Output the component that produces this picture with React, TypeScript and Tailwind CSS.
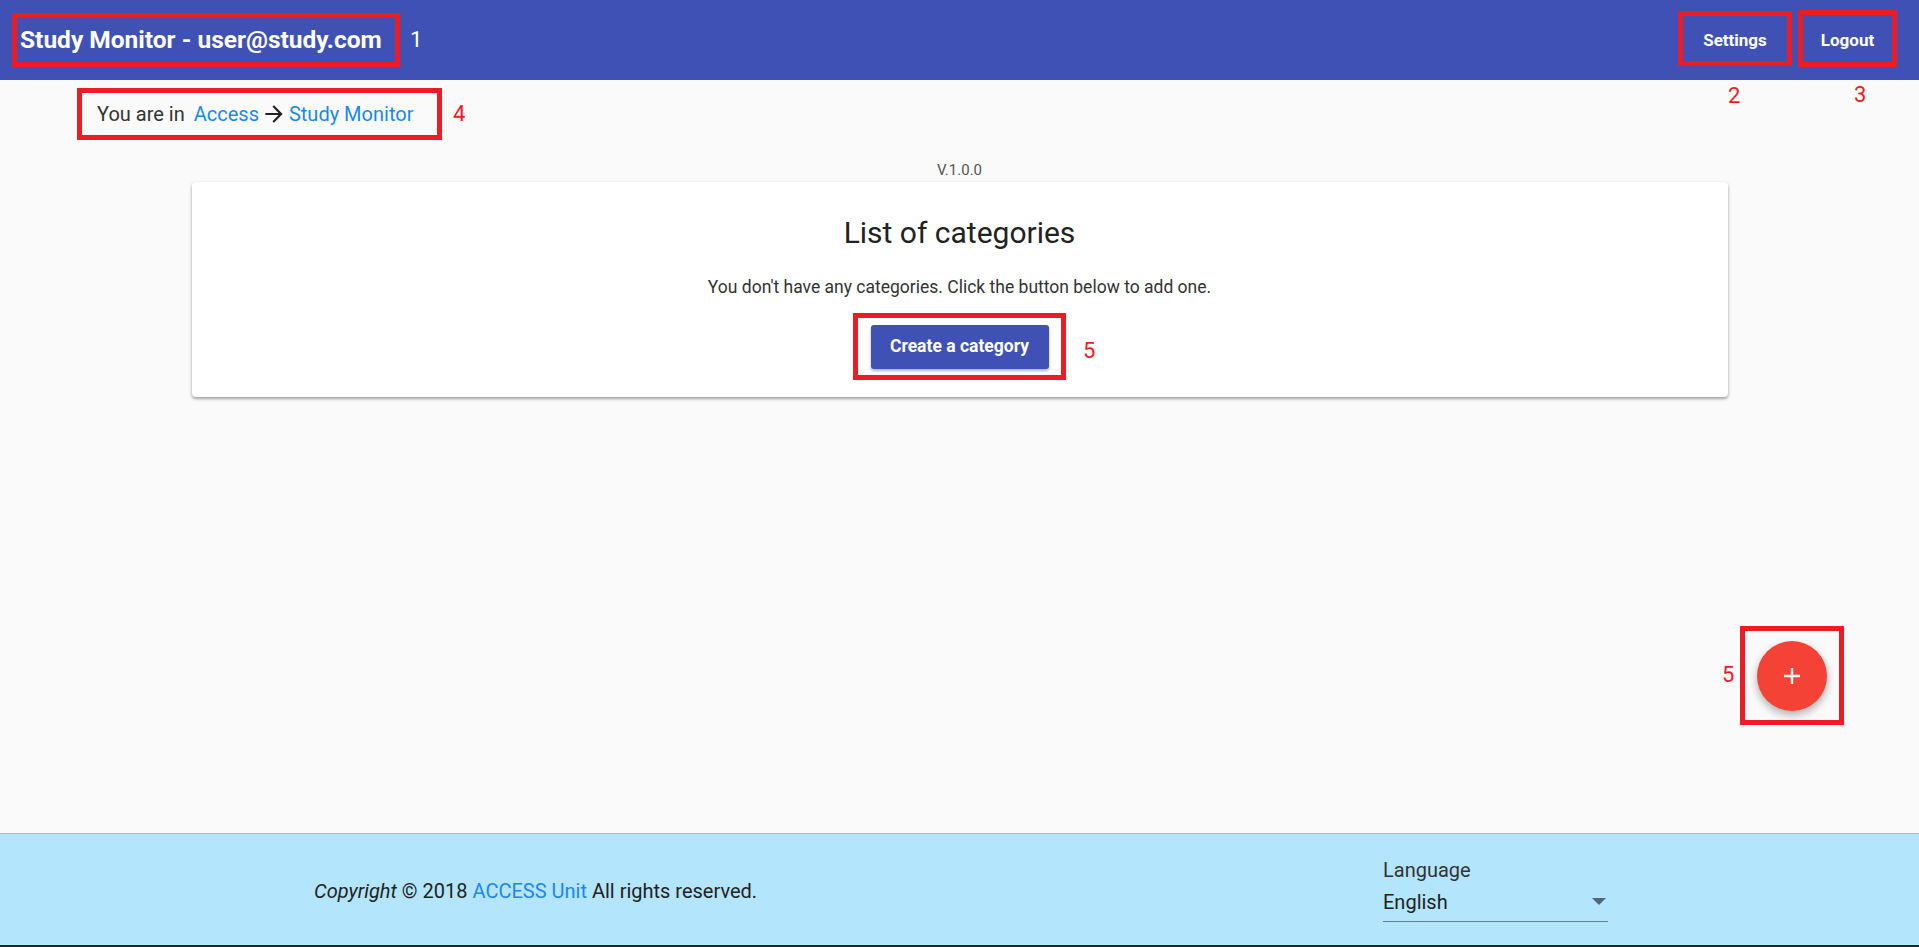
import React from "react";

const frame = "border-[5px] border-[#ed1c24]";
const label = "text-[#ed1c24] text-[22px] leading-none";

export default function App() {
  return (
    <div
      className="relative min-h-[947px] h-[947px] flex flex-col bg-[#fafafa] text-[#212121] overflow-hidden"
      style={{ fontFamily: "Roboto, 'Noto Sans', sans-serif" }}
    >
      {/* Header */}
      <header className="relative h-[80px] shrink-0 bg-[#3f51b5] flex items-center justify-between pl-[12px] pr-[22px]">
        <div className="flex items-center gap-[10px]">
          <div className={`${frame} h-[54px] w-[388px] flex items-center pl-[3px]`}>
            <span className="text-white text-[24.5px] font-bold leading-none">Study Monitor - user@study.com</span>
          </div>
          <span className="text-white text-[22px] leading-none">1</span>
        </div>
        <div className="flex items-center gap-[6px] self-start mt-[10px]">
          <div className="relative">
            <div className={`${frame} h-[55px] w-[114px] flex items-center justify-center pt-[4px]`}>
              <span className="text-white text-[17px] font-bold">Settings</span>
            </div>
            <span className={`absolute left-[50px] top-[74px] ${label}`}>2</span>
          </div>
          <div className="relative">
            <div className={`${frame} h-[57px] w-[99px] flex items-center justify-center pt-[4px]`}>
              <span className="text-white text-[17px] font-bold">Logout</span>
            </div>
            <span className={`absolute left-[56px] top-[74px] ${label}`}>3</span>
          </div>
        </div>
      </header>

      {/* Main */}
      <main className="flex-1 flex flex-col">
        <div className="flex items-center pl-[77px] pt-[8px] gap-[11px]">
          <div className={`${frame} h-[52px] w-[365px] flex items-center pl-[15px] text-[20px]`}>
            <span className="text-[#333]">You are in</span>
            <span className="text-[#1a88f0] ml-[9px]">Access</span>
            <span className="mx-[2px] flex items-center">
              <svg width="26" height="26" viewBox="0 0 24 24">
                <path d="M12 4l-1.41 1.41L16.17 11H4v2h12.17l-5.58 5.59L12 20l8-8z" fill="#222" />
              </svg>
            </span>
            <span className="text-[#1a88f0]">Study Monitor</span>
          </div>
          <span className={label}>4</span>
        </div>

        <div className="text-center text-[15px] text-[#555] mt-[21px] leading-[18px]">V.1.0.0</div>

        <div className="mx-auto mt-[3px] w-[1536px] h-[215px] bg-white rounded-[4px] shadow-[0_2px_3px_rgba(0,0,0,0.3),0_1px_4px_rgba(0,0,0,0.1)] flex flex-col items-center">
          <h1 className="text-[30px] font-normal text-[#222] mt-[33px] leading-[36px]">List of categories</h1>
          <p className="text-[17.5px] text-[#333] mt-[25px] leading-[22px]">
            You don't have any categories. Click the button below to add one.
          </p>
          <div className="relative mt-[15px]">
            <div className={`${frame} w-[213px] h-[67px] flex items-center justify-center`}>
              <button className="w-[178px] h-[44px] bg-[#3f51b5] rounded-[3px] text-white text-[17.5px] font-bold shadow-[0_2px_3px_rgba(0,0,0,0.3)]">
                Create a category
              </button>
            </div>
            <span className={`absolute left-[230px] top-[27px] ${label}`}>5</span>
          </div>
        </div>
      </main>

      {/* FAB */}
      <div className="absolute left-[1740px] top-[626px]">
        <div className={`${frame} w-[104px] h-[99px] flex items-center justify-center`}>
          <button className="w-[70px] h-[70px] rounded-full bg-[#f44336] flex items-center justify-center shadow-[0_4px_8px_rgba(0,0,0,0.3)]">
            <svg width="20" height="20" viewBox="0 0 20 20">
              <path d="M10 2v16M2 10h16" stroke="white" strokeWidth="2.4" />
            </svg>
          </button>
        </div>
        <span className={`absolute left-[-18px] top-[38px] ${label}`}>5</span>
      </div>

      {/* Footer */}
      <footer className="h-[114px] shrink-0 bg-[#b3e5fc] border-t border-[#b0bec5] border-b-[2px] border-b-[#222] relative">
        <div className="absolute left-[314px] top-[45px] text-[20px] text-[#222] leading-[24px]">
          <i>Copyright</i> © 2018 <span className="text-[#1a88f0]">ACCESS Unit</span> All rights reserved.
        </div>
        <div className="absolute left-[1383px] top-[24px] w-[225px]">
          <div className="text-[20px] text-[#333] leading-[24px]">Language</div>
          <div className="flex items-center justify-between h-[40px] border-b border-[rgba(0,0,0,0.45)] text-[20px] text-[#222]">
            <span>English</span>
            <svg width="14" height="8" viewBox="0 0 14 8" className="mr-[2px]">
              <path d="M0 0h14L7 7z" fill="rgba(0,0,0,0.55)" />
            </svg>
          </div>
        </div>
      </footer>
    </div>
  );
}
